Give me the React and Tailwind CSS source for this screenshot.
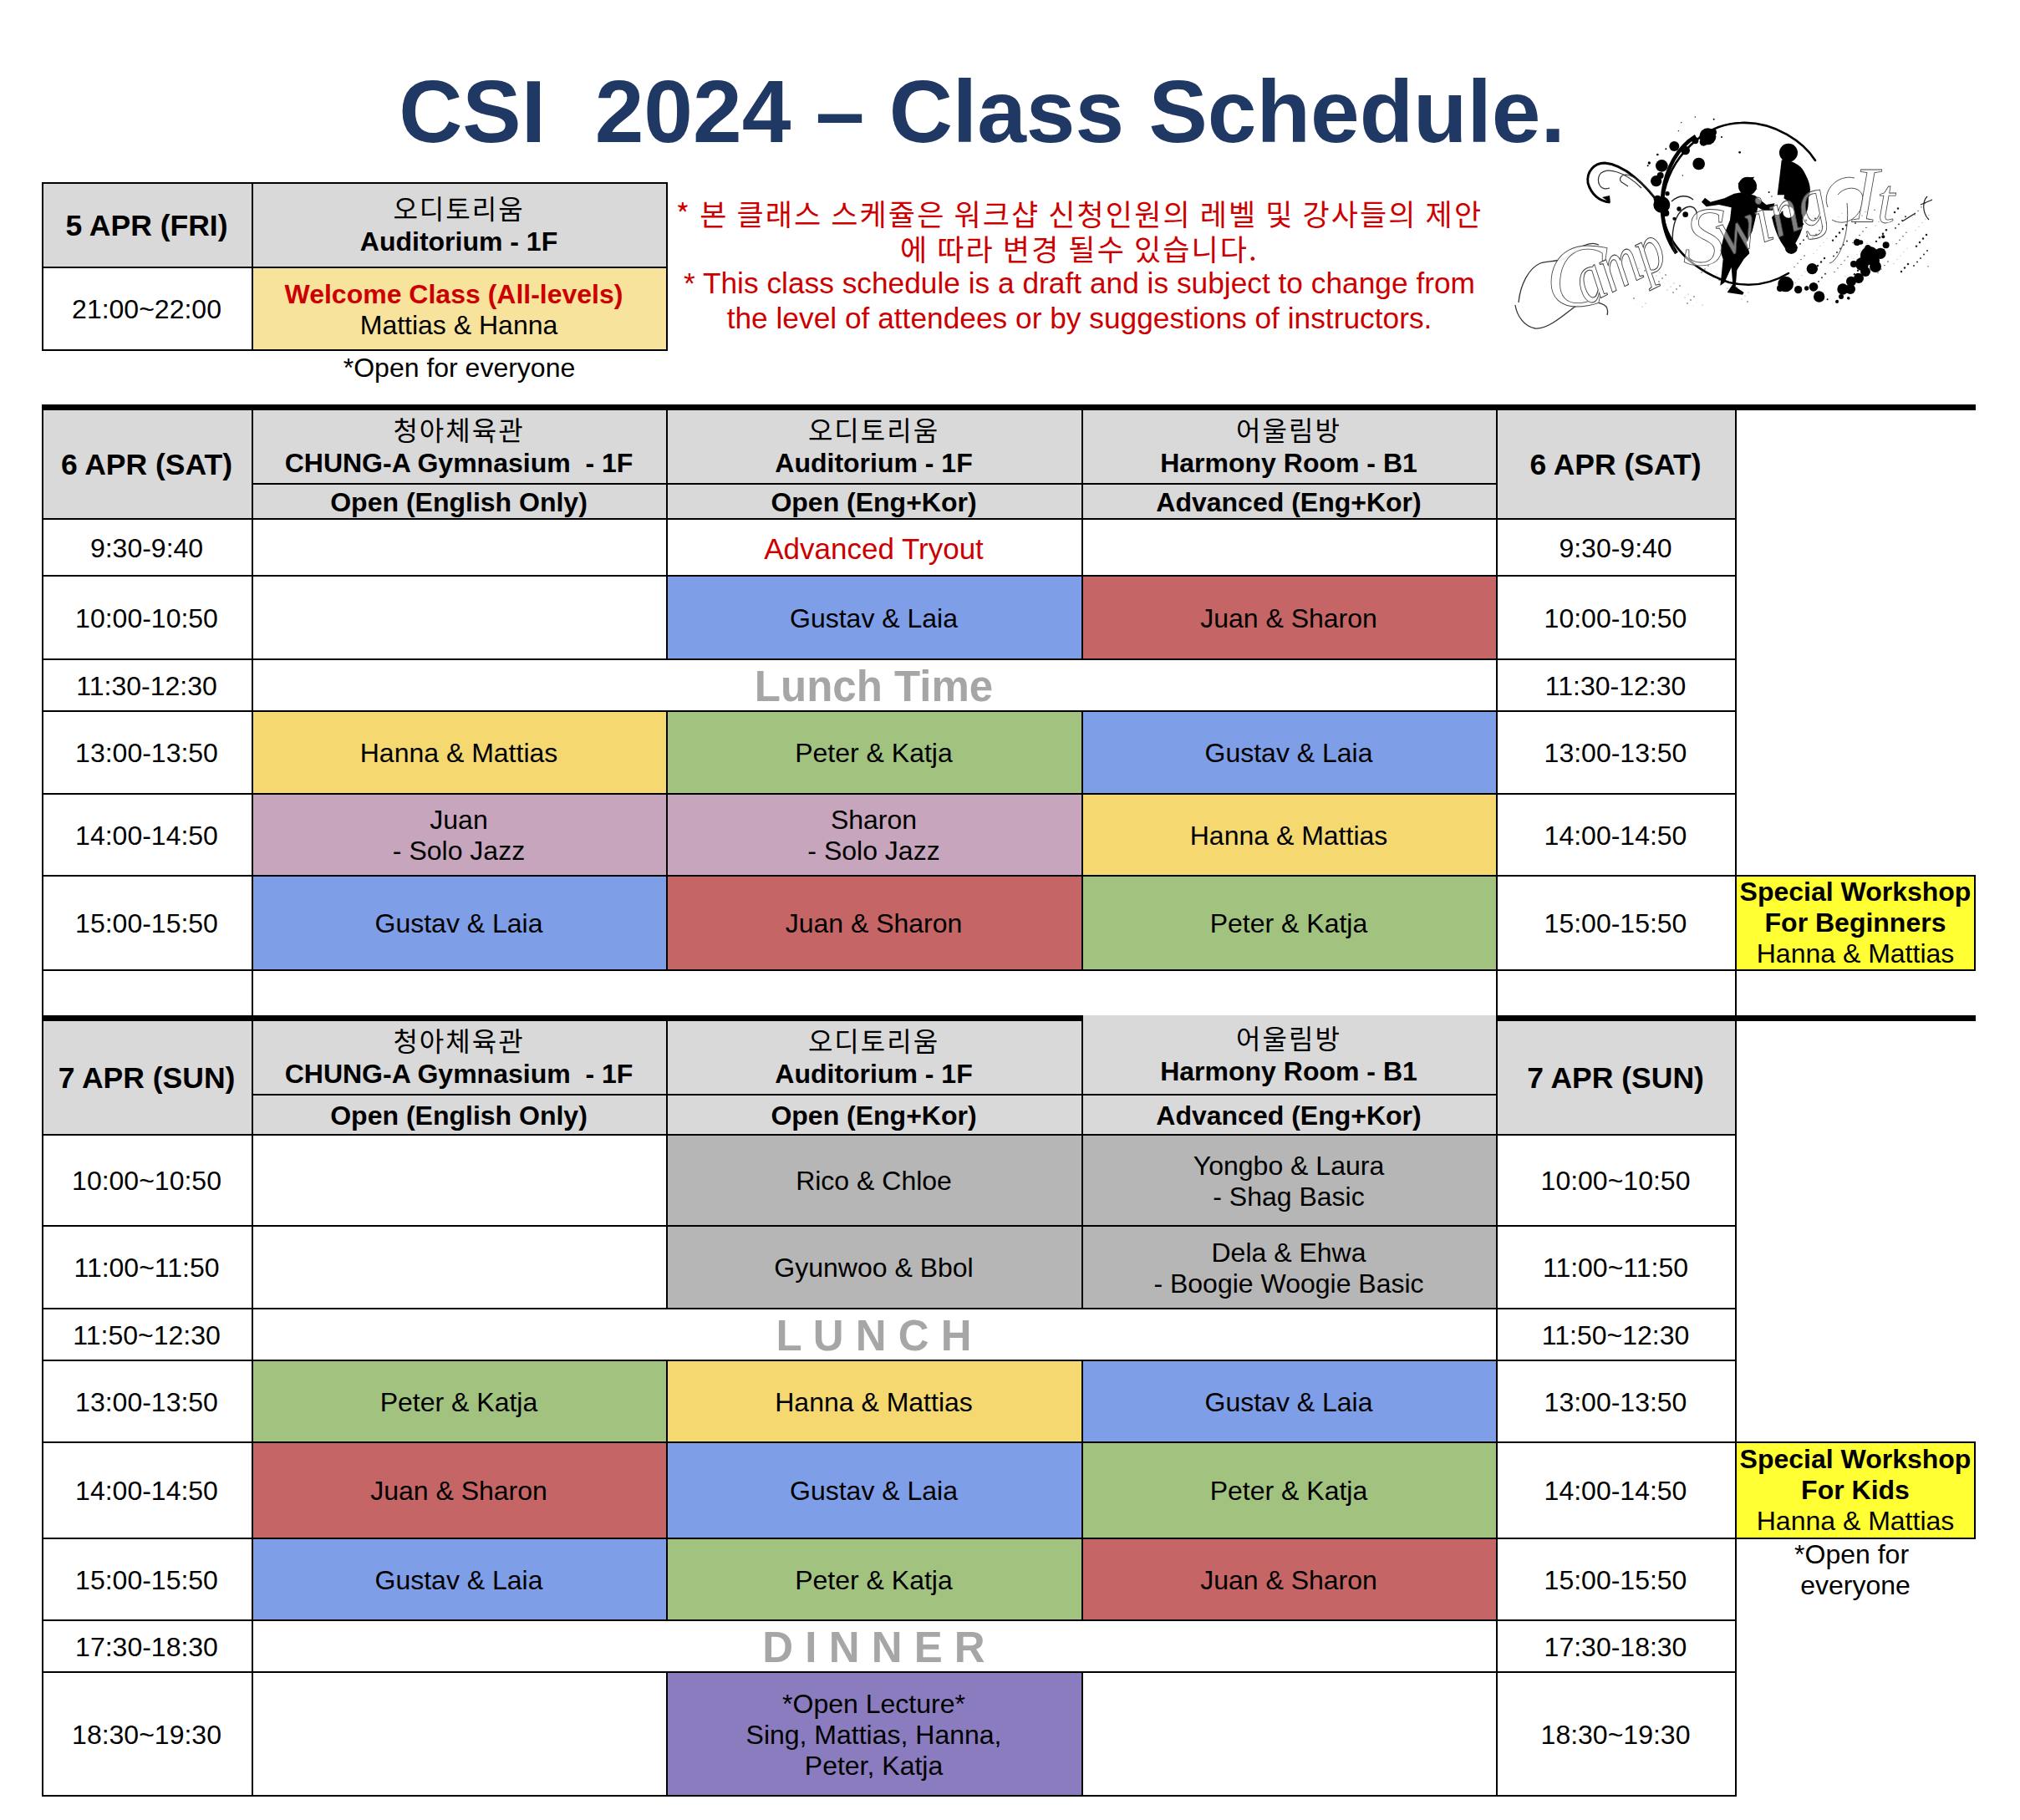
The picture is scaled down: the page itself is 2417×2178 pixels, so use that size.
const FONT = "font-['Liberation_Sans','Noto_Sans_CJK_KR',sans-serif]";
const KO = ({ children }) => <div className="tracking-[2px] -translate-y-[4px] font-['Noto_Sans_CJK_KR','Liberation_Sans',sans-serif] font-normal">{children}</div>;

const C = ({ className = "", children }) => (
  <div className={`flex flex-col items-center justify-center text-center border-r-2 border-b-2 border-black min-w-0 pt-[2px] pr-[2px] ${className}`}>{children}</div>
);
const Time = ({ children }) => <C className="border-l-2 bg-white">{children}</C>;
const TimeR = ({ children }) => <C className="bg-white">{children}</C>;
const E = () => <C className="bg-white" />;
const Blue = ({ children = "Gustav & Laia" }) => <C className="bg-[#7f9ee8]">{children}</C>;
const Red = ({ children = "Juan & Sharon" }) => <C className="bg-[#c66566]">{children}</C>;
const Green = ({ children = "Peter & Katja" }) => <C className="bg-[#a1c37f]">{children}</C>;
const Yellow = ({ children = "Hanna & Mattias" }) => <C className="bg-[#f5d970]">{children}</C>;
const Pink = ({ children }) => <C className="bg-[#c7a5bc]">{children}</C>;
const Gray = ({ children }) => <C className="bg-[#b6b6b6]">{children}</C>;
const Head = ({ ko, en }) => (
  <C className="bg-[#d9d9d9] font-bold"><KO>{ko}</KO><div className="whitespace-pre">{en}</div></C>
);
const Sub = ({ children }) => <C className="bg-[#d9d9d9] font-bold">{children}</C>;
const DateL = ({ children }) => <C className="row-span-2 border-l-2 bg-[#d9d9d9] font-bold text-[35.5px]">{children}</C>;
const DateR = ({ children }) => <C className="row-span-2 bg-[#d9d9d9] font-bold text-[35.5px]">{children}</C>;
const Banner = ({ children }) => (
  <C className="col-span-3 bg-white font-bold text-[#a6a6a6] text-[51px] whitespace-pre">{children}</C>
);
const Workshop = ({ title }) => (
  <div className="flex flex-col items-center justify-center text-center bg-[#ffff33] border-r-2 border-b-2 border-t-2 -mt-[2px] border-black leading-[37px] whitespace-nowrap">
    <div className="font-bold">Special Workshop</div>
    <div className="font-bold">{title}</div>
    <div>Hanna &amp; Mattias</div>
  </div>
);

/* blots given in a 3x grid, shown through a scale(1/3) group */
const BLOTS = [
  [250,100,30],[270,85,12],[235,120,14],[130,135,18],[170,150,16],[205,115,12],[218,198,22],[85,205,22],[65,260,20],[80,240,12],[85,345,30],[70,325,14],[100,375,12],
  [105,305,8],[170,380,10],[147,360,8],[130,395,6],[625,575,20],[530,630,28],[510,645,12],[575,650,14],[630,640,16],[605,645,8],[650,675,20],[735,648,20],[765,620,18],[790,600,10],[550,500,22],[715,690,4],[755,680,5],
  [365,157,4],[160,240,2],[40,195,5],[35,205,3],[70,165,4],[100,145,3],[145,80,2],[155,50,2],[205,30,2],[272,38,3],[300,102,3],[470,300,3],[480,315,2],[680,685,3],
  [825,500,11],[800,480,8],[845,530,7],[855,545,12],[870,520,20],[890,490,12],[880,460,6],
];
const RIGHT = [
  [423,173,11],[414,183,8],[430,186,7],[418,192,6],[408,157,4],[404,183,4],[400,213,6],[410,200,6],[389,222,3],[384,228,2],[398,224,1.5],
];
const DOTS = Array.from({ length: 130 }, (_, i) => [
  330 + ((i * 73) % 170),
  130 + ((i * 37) % 80) - ((i * 73) % 170) * 0.13,
  0.4 + (i % 4) * 0.28,
]);
const DOTS2 = Array.from({ length: 60 }, (_, i) => [
  140 + ((i * 41) % 140),
  185 + ((i * 29) % 50),
  0.3 + (i % 3) * 0.3,
]);

const Logo = () => (
  <svg width="510" height="265" viewBox="0 0 510 265" className="shrink-0 ml-[30px] -mt-[85px] overflow-visible">
    {DOTS.map(([x, y, r], i) => <circle key={i} cx={x} cy={y} r={r} fill="#222" />)}
    {DOTS2.map(([x, y, r], i) => <circle key={i} cx={x} cy={y} r={r} fill="#888" />)}
    {RIGHT.map(([x, y, r], i) => <circle key={i} cx={x} cy={y} r={r} fill="#000" />)}
    <path d="M358 59 C345 38 310 12 269 14 C225 15 183 55 176 104 C170 150 205 188 255 205 C285 212 308 205 326 194" fill="none" stroke="#000" strokeWidth="2.6" strokeLinecap="round" />
    <path d="M215 30 C192 44 180 70 176 95 C172 125 178 150 192 170" fill="none" stroke="#000" strokeWidth="4.5" />
    <path d="M112 109 C100 108 90 100 86 86 C84 72 94 62 106 62 C130 64 155 88 172 112" fill="none" stroke="#000" strokeWidth="2.8" />
    <path d="M113 110 L112 101 L103 103 Z" fill="#000" />
    <path d="M112 92 C100 96 96 84 100 76 C108 66 130 72 150 92 M128 86 C122 84 124 76 132 76 C145 78 158 92 170 108 M128 86 L134 90" fill="none" stroke="#333" strokeWidth="1.2" />
    <path d="M186 108 C195 100 205 100 212 106 M190 170 C184 150 188 122 204 115 C214 112 218 120 216 130" fill="none" stroke="#222" strokeWidth="1.4" />

    <g transform="translate(146 -3) scale(0.3333)">
      {BLOTS.map(([x, y, r], i) => <circle key={i} cx={x} cy={y} r={r} fill="#000" />)}
      <circle cx="540" cy="158" r="33" fill="#000" />
      <path d="M515 185 C530 180 580 195 595 225 C615 260 625 290 612 320 C612 350 610 375 590 395 C600 430 570 480 540 520 L520 490 C500 460 490 430 480 390 L520 350 L525 310 L500 310 C505 270 510 230 515 185Z" fill="#000" />
      <circle cx="393" cy="278" r="33" fill="#000" />
      <path d="M358 270 L380 248 L418 245 L405 262 L428 290 L395 285 Z" fill="#000" />
      <path d="M228 335 L240 320 L260 335 L310 322 L345 305 L375 300 L420 312 L460 345 L490 340 L485 365 L450 365 L430 355 L420 400 L410 440 L390 480 L400 520 L380 540 L355 580 L350 640 L380 660 L375 668 L320 660 L340 630 L335 570 L310 625 L295 635 L300 590 L305 540 L295 510 L310 450 L330 400 L335 355 L290 345 L245 352 Z" fill="#000" />
      <circle cx="515" cy="345" r="24" fill="#fff" /><circle cx="540" cy="372" r="20" fill="#fff" /><circle cx="500" cy="365" r="16" fill="#fff" />
    </g>

    <path d="M99 160 C88 155 75 162 58 177 C45 180 36 180 29 182 C15 188 5 208 3 229 M-1 232 C1 245 10 258 23 260 C36 261 50 250 69 235 C80 228 100 226 108 234 C110 238 110 241 109 244" fill="none" stroke="#333" strokeWidth="1.3" />
    <path d="M373 115 C365 95 385 75 405 80 M378 130 C395 140 415 125 415 105 C415 90 395 88 385 100 M396 110 C400 150 385 180 375 182" fill="none" stroke="#555" strokeWidth="1" />
    <g stroke="#444" strokeWidth="0.8" className="font-['Liberation_Serif',serif] italic">
      <text x="36" y="233" fontSize="108" fill="#fff" fillOpacity="0.9">C</text>
      <text transform="translate(84 232) rotate(-26) scale(1.05 1.35)" fontSize="62" fill="#fff" fillOpacity="0.85">amp</text>
      <text x="200" y="183" fontSize="100" fill="#fff" fillOpacity="0.55">S</text>
      <text transform="translate(250 174) rotate(-20) scale(1 1.15)" fontSize="70" fill="#fff" fillOpacity="0.5">wing</text>
      <text x="402" y="133" fontSize="96" fill="#fff" fillOpacity="0.75">I</text>
      <text x="432" y="133" fontSize="76" fill="#fff" fillOpacity="0.75">t</text>
    </g>
    <path d="M492 102 C486 108 486 122 494 130 M484 112 L498 106 M462 132 L478 122" fill="none" stroke="#222" strokeWidth="1.2" />
  </svg>
);

export default function App() {
  return (
    <div className={`w-[2417px] min-h-[2178px] bg-white text-black pl-[50px] text-[32px] leading-[37px] ${FONT}`}>
      <div className="h-[218px] w-[2250px] pt-[81px] text-center font-bold text-[105.5px] leading-[105px] text-[#203864] whitespace-pre">CSI  2024 – Class Schedule.</div>

      <div className="flex h-[266px] items-start">
        <div className="w-[749px] shrink-0">
          <div className="grid grid-cols-[253px_496px] grid-rows-[101px_99px] border-t-2 border-black">
            <C className="border-l-2 bg-[#d9d9d9] font-bold text-[35.5px]">5 APR (FRI)</C>
            <Head ko="오디토리움" en="Auditorium - 1F" />
            <Time>21:00~22:00</Time>
            <C className="bg-[#f8e39c]">
              <div className="font-bold text-[#cc0000] pr-[12px]">Welcome Class (All-levels)</div>
              <div>Mattias &amp; Hanna</div>
            </C>
          </div>
          <div className="pt-[2px] pl-[250px] text-center">*Open for everyone</div>
        </div>
        <div className="w-[985px] shrink-0 pt-[16px] text-center text-[#cc0000] text-[35.3px] leading-[42px]">
          <div className="font-['Noto_Sans_CJK_KR',sans-serif] tracking-[2.1px] text-[35px]">* 본 클래스 스케쥴은 워크샵 신청인원의 레벨 및 강사들의 제안<br />에 따라 변경 될수 있습니다.</div>
          <div>* This class schedule is a draft and is subject to change from<br />the level of attendees or by suggestions of instructors.</div>
        </div>
        <Logo />
      </div>

      <div className="grid w-[2314px] grid-cols-[253px_496px_497px_496px_286px_286px] grid-rows-[7px_89px_42px_68px_100px_62px_99px_98px_113px_53px_7px_89px_48px_109px_99px_62px_98px_115px_98px_62px_148px]">
        <div className="col-span-6 bg-black" />

        <DateL>6 APR (SAT)</DateL>
        <Head ko="청아체육관" en="CHUNG-A Gymnasium  - 1F" />
        <Head ko="오디토리움" en="Auditorium - 1F" />
        <Head ko="어울림방" en="Harmony Room - B1" />
        <DateR>6 APR (SAT)</DateR>
        <div className="row-span-7" />
        <Sub>Open (English Only)</Sub>
        <Sub>Open (Eng+Kor)</Sub>
        <Sub>Advanced (Eng+Kor)</Sub>

        <Time>9:30-9:40</Time><E />
        <C className="bg-white text-[#cc0000] text-[35px]">Advanced Tryout</C>
        <E /><TimeR>9:30-9:40</TimeR>

        <Time>10:00-10:50</Time><E /><Blue /><Red /><TimeR>10:00-10:50</TimeR>

        <Time>11:30-12:30</Time><Banner>Lunch Time</Banner><TimeR>11:30-12:30</TimeR>

        <Time>13:00-13:50</Time><Yellow /><Green /><Blue /><TimeR>13:00-13:50</TimeR>

        <Time>14:00-14:50</Time>
        <Pink><div>Juan</div><div>- Solo Jazz</div></Pink>
        <Pink><div>Sharon</div><div>- Solo Jazz</div></Pink>
        <Yellow /><TimeR>14:00-14:50</TimeR>

        <Time>15:00-15:50</Time><Blue /><Red /><Green /><TimeR>15:00-15:50</TimeR>
        <Workshop title="For Beginners" />

        <div className="border-l-2 border-r-2 border-black" />
        <div className="col-span-3 border-r-2 border-black" />
        <div className="border-r-2 border-black" />
        <div />

        <div className="col-span-3 bg-black" />
        <div className="row-span-2 flex flex-col items-center justify-center text-center pt-[4px] pr-[2px] bg-[#d9d9d9] font-bold border-b-2 border-r-2 border-black">
          <KO>어울림방</KO><div>Harmony Room - B1</div>
        </div>
        <div className="col-span-2 bg-black" />

        <DateL>7 APR (SUN)</DateL>
        <Head ko="청아체육관" en="CHUNG-A Gymnasium  - 1F" />
        <Head ko="오디토리움" en="Auditorium - 1F" />
        <DateR>7 APR (SUN)</DateR>
        <div className="row-span-6" />
        <Sub>Open (English Only)</Sub>
        <Sub>Open (Eng+Kor)</Sub>
        <Sub>Advanced (Eng+Kor)</Sub>

        <Time>10:00~10:50</Time><E />
        <Gray>Rico &amp; Chloe</Gray>
        <Gray><div>Yongbo &amp; Laura</div><div>- Shag Basic</div></Gray>
        <TimeR>10:00~10:50</TimeR>

        <Time>11:00~11:50</Time><E />
        <Gray>Gyunwoo &amp; Bbol</Gray>
        <Gray><div>Dela &amp; Ehwa</div><div>- Boogie Woogie Basic</div></Gray>
        <TimeR>11:00~11:50</TimeR>

        <Time>11:50~12:30</Time><Banner>L U N C H</Banner><TimeR>11:50~12:30</TimeR>

        <Time>13:00-13:50</Time><Green /><Yellow /><Blue /><TimeR>13:00-13:50</TimeR>

        <Time>14:00-14:50</Time><Red /><Blue /><Green /><TimeR>14:00-14:50</TimeR>
        <Workshop title="For Kids" />

        <Time>15:00-15:50</Time><Blue /><Green /><Red /><TimeR>15:00-15:50</TimeR>
        <div className="row-span-3 text-center whitespace-pre pr-[2px]">{"*Open for \neveryone"}</div>

        <Time>17:30-18:30</Time><Banner>D I N N E R</Banner><TimeR>17:30-18:30</TimeR>

        <Time>18:30~19:30</Time><E />
        <C className="bg-[#8b7cbf]"><div>*Open Lecture*</div><div>Sing, Mattias, Hanna,</div><div>Peter, Katja</div></C>
        <E /><TimeR>18:30~19:30</TimeR>
      </div>
    </div>
  );
}
